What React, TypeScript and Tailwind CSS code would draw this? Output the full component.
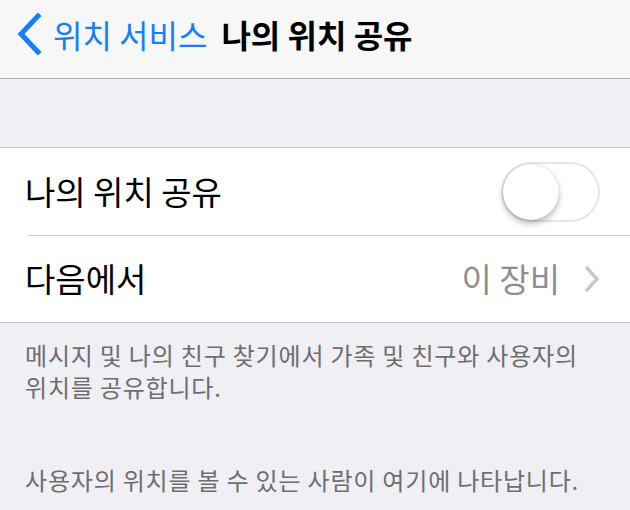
const font = { fontFamily: '"Noto Sans CJK KR", "Noto Sans", sans-serif' };

function Toggle() {
	return (
		<div className="relative h-[60px] w-[99px] rounded-full border-2 border-[#e6e6e6] bg-white">
			<div className="absolute top-0 left-0 h-[56px] w-[56px] rounded-full bg-white shadow-[0_4px_6px_rgba(0,0,0,0.25),0_0_1px_rgba(0,0,0,0.3)]" />
		</div>
	);
}

function Chevron() {
	return (
		<svg width="16" height="28" viewBox="0 0 16 28" fill="none">
			<path d="M2 2 L13 14 L2 26" stroke="#c7c7cc" strokeWidth="3.5" />
		</svg>
	);
}

function BackChevron() {
	return (
		<svg width="26" height="42" viewBox="0 0 26 42" fill="none" className="ml-[16px]">
			<path d="M22 3 L5 21 L22 39" stroke="#157efb" strokeWidth="5" strokeLinecap="square" />
		</svg>
	);
}

export default function App() {
	return (
		<div className="h-[510px] w-[630px] overflow-hidden bg-[#efeff4]" style={font}>
			<div className="flex h-[79px] items-center border-b border-[#b2b2b2] bg-[#f7f7f8] pb-[10px]">
				<BackChevron />
				<span className="ml-[11px] text-[32px] text-[#157efb]">위치 서비스</span>
				<span className="ml-[14px] text-[32px] font-bold text-black">나의 위치 공유</span>
			</div>

			<div className="mt-[68px] border-y border-[#c8c7cc] bg-white">
				<div className="flex h-[87px] items-center justify-between pr-[30px] pl-[25px]">
					<span className="text-[33px] text-black">나의 위치 공유</span>
					<Toggle />
				</div>
				<div className="ml-[28px] h-px bg-[#c8c7cc]" />
				<div className="flex h-[86px] items-center pr-[30px] pl-[25px]">
					<span className="flex-1 text-[33px] text-black">다음에서</span>
					<span className="mr-[24px] text-[33px] text-[#8e8e93]">이 장비</span>
					<Chevron />
				</div>
			</div>

			<p className="mt-[16px] px-[25px] text-[24px] leading-[32px] tracking-[0.8px] text-[#6d6d72]">
				메시지 및 나의 친구 찾기에서 가족 및 친구와 사용자의
				<br />
				위치를 공유합니다.
			</p>
			<p className="mt-[61px] px-[25px] text-[24px] leading-[32px] tracking-[0.8px] text-[#6d6d72]">
				사용자의 위치를 볼 수 있는 사람이 여기에 나타납니다.
			</p>
		</div>
	);
}
